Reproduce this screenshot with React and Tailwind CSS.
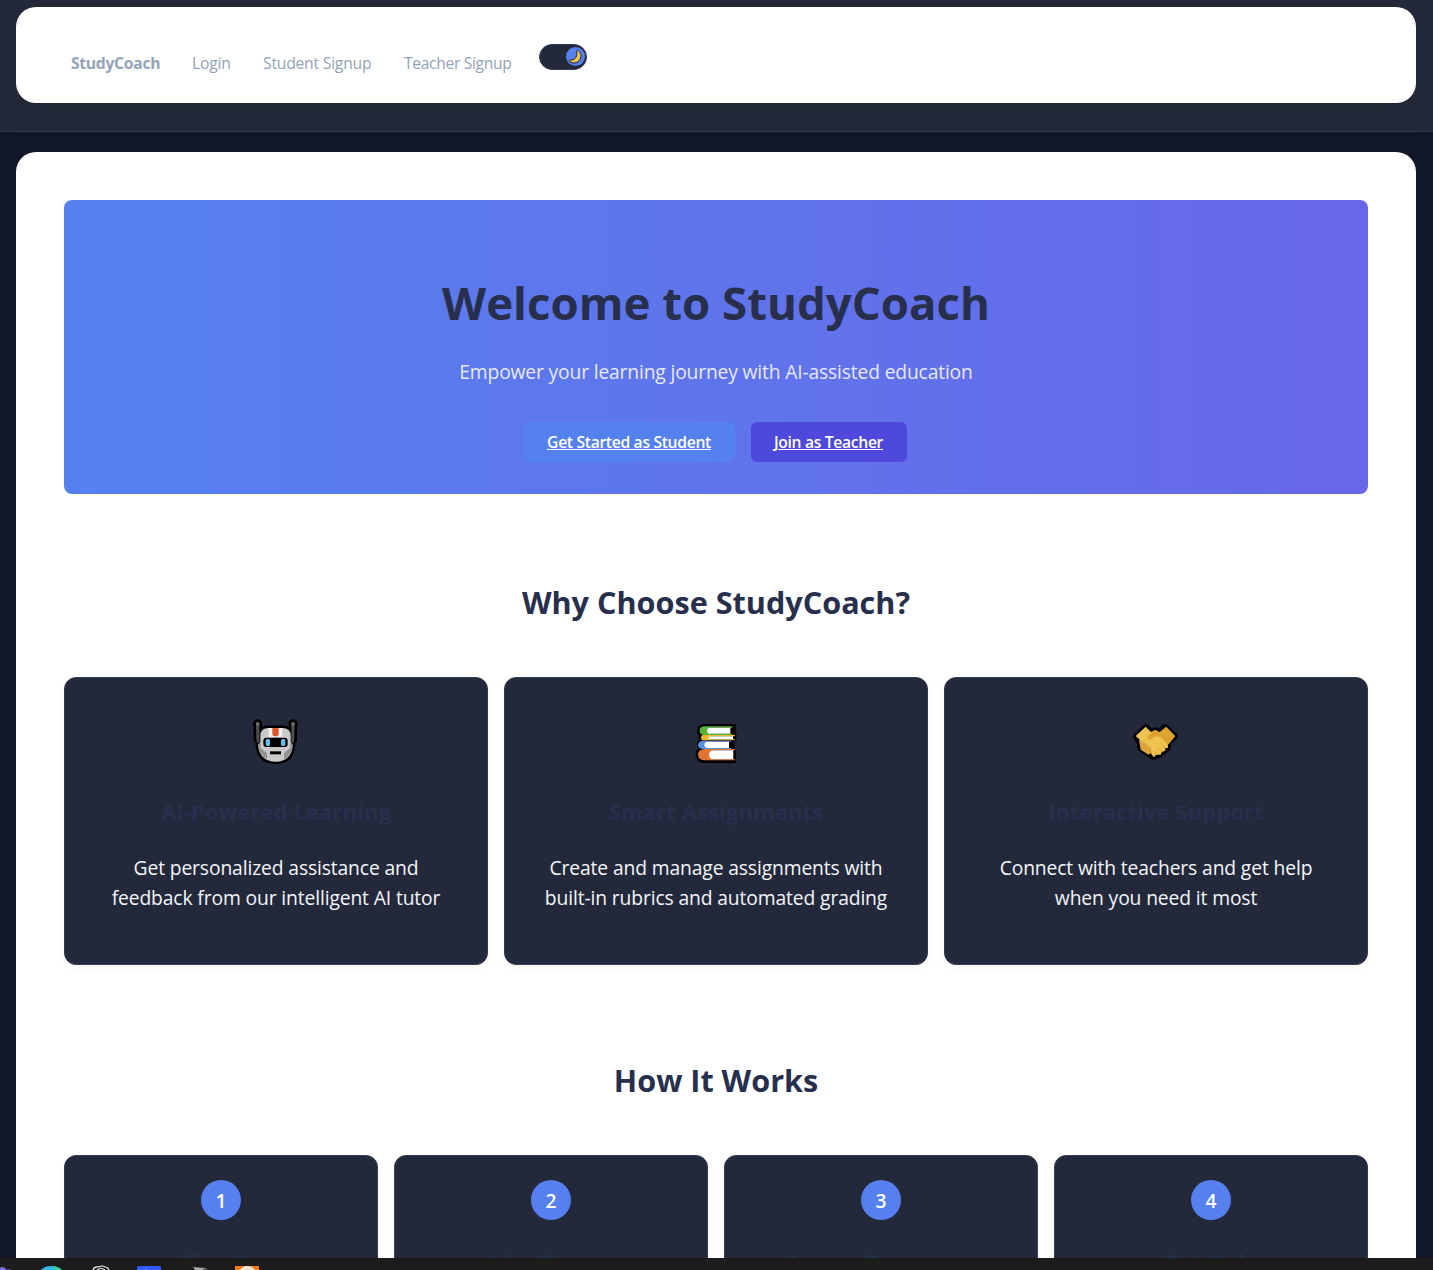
function Moon() {
  return (
    <svg viewBox="0 0 19 19" className="size-[19px]">
      <path d="M12 3.600c2.900 2 3.700 5.500 2.200 8.500-2 4-7 5-10.600 2.500-.6-.5-.2-1.400.5-1.400 3.600 0 6-1.900 6.700-5 .3-1.400.1-2.600-.2-3.900-.1-.7.800-1.200 1.400-.7z" fill="#f5c64c" stroke="#11131c" strokeWidth=".9" strokeLinejoin="round" />
    </svg>
  );
}

function Robot() {
  return (
    <svg viewBox="3 0 240 210" className="h-[70px] w-20">
      <g fill="none" stroke="#000" strokeLinecap="round" strokeLinejoin="round">
        <path d="M68 56V104M174 56V104" strokeWidth="24" />
        <circle cx="68" cy="57" r="7" strokeWidth="14" />
        <circle cx="174" cy="57" r="7" strokeWidth="14" />
        <path d="M76 112V96Q76 69 101 69H142Q167 69 167 96V112L173 120Q170 170 122 170Q74 170 69 120Z" fill="#000" strokeWidth="15" />
      </g>
      <path d="M63 58H73V113H66Q63 100 64 85ZM169 58H179L178 85Q179 100 176 113H169Z" fill="#505050" />
      <circle cx="68" cy="57" r="6" fill="#6b6b6b" />
      <circle cx="174" cy="57" r="6" fill="#6b6b6b" />
      <path d="M76 112V93Q76 69 101 69H142Q167 69 167 93V112L173 120Q170 170 122 170Q74 170 69 120Z" fill="#c9c9c9" />
      <path d="M69 119L77 112V128L96 145V162Q72 150 69 119ZM173 119L166 112V128L147 145V162Q170 150 173 119Z" fill="#929292" />
      <path d="M101 69H142V96H101Z" fill="#f2f2f2" />
      <path d="M112 69H131V86Q131 94 122 94Q112 94 112 86Z" fill="#dd562c" />
      <rect x="85" y="98" width="73" height="28" rx="9" fill="#000" />
      <rect x="92" y="102" width="13" height="21" rx="5" fill="#62c1ec" />
      <rect x="138" y="102" width="13" height="21" rx="5" fill="#62c1ec" />
      <rect x="105" y="139" width="33" height="9" fill="#000" />
    </svg>
  );
}

function Books() {
  return (
    <svg viewBox="3 0 240 210" className="h-[70px] w-20">
      <path d="M88 57H183V85H184V108H179V130H183V174H83Q62 169 62 149Q62 136 70 130Q62 115 72 105Q70 97 70 92Q62 76 70 65Q78 57 88 57Z" fill="#000" />
      <path d="M172 64H87Q74 65 74 77Q74 90 90 90H172V86H106V68H172Z" fill="#55b236" />
      <path d="M166 68H104Q96 69 96 78Q97 86 105 86H166Z" fill="#fff" />
      <path d="M180 90H83Q78 91 78 98Q78 106 87 106H180V103H105V94H180Z" fill="#efb72f" />
      <path d="M174 94H106Q101 95 101 99Q101 103 106 103H174Z" fill="#fff" />
      <path d="M168 107H84Q69 109 69 120Q70 132 85 132H168V129H95V110H168Z" fill="#5590dc" />
      <path d="M162 110H95Q88 112 88 120Q89 129 98 129H162Z" fill="#fff" />
      <path d="M180 132H90Q69 133 69 149Q70 166 91 166H180V163H112V136H180Z" fill="#e07430" />
      <path d="M175 136H114Q102 138 102 149Q104 163 116 163H175Z" fill="#fff" />
    </svg>
  );
}

function Handshake() {
  return (
    <svg viewBox="3 0 240 210" className="h-[70px] w-20">
      <path d="M93 64L111 79L121 74L132 79L151 64L181 93L160 116V128L149 139L137 148L125 154L114 157L99 147L76 132L72 113L62 94Z" fill="#000" stroke="#000" strokeWidth="15" strokeLinejoin="round" />
      <path d="M154 65L181 94L158 121L140 110L111 91L96 97L105 82L121 75L133 82Z" fill="#dca42f" />
      <path d="M72 104L90 104L107 132L108 145L101 149L77 134Z" fill="#dca438" />
      <path d="M92 65L62 93L78 107L93 116L106 130L109 147L116 157L124 149L137 149L140 141L151 137L150 130L160 128L158 119L130 88L110 83Z" fill="#efc34f" />
      <path d="M110 83L98 94Q93 102 103 104Q109 104 117 95L130 94L137 98L134 82L121 75Z" fill="#dca42f" />
      <path d="M140 120L151 131M129 129L141 142M119 139L127 150" fill="none" stroke="#d9a139" strokeWidth="3" />
    </svg>
  );
}

const features = [
  { Icon: Robot, title: 'AI-Powered Learning', lines: ['Get personalized assistance and', 'feedback from our intelligent AI tutor'] },
  { Icon: Books, title: 'Smart Assignments', lines: ['Create and manage assignments with', 'built-in rubrics and automated grading'] },
  { Icon: Handshake, title: 'Interactive Support', lines: ['Connect with teachers and get help', 'when you need it most'] },
];

const steps = ['Sign Up', 'Join Classes', 'Access Resources', 'Get Help'];

function Taskbar() {
  return (
    <footer className="absolute inset-x-0 bottom-0 h-3 bg-[#1c1c1c]">
      <svg viewBox="0 0 290 12" className="block h-3 w-[290px]">
        <circle cx="2" cy="14" r="5" fill="#7673dd" />
        <circle cx="9" cy="14" r="3" fill="#5b4a85" />
        <path d="M41 12Q44 8 51 8Q58 8 62 12Z" fill="#32b9df" />
        <path d="M54 8Q59 9 62 12H55Z" fill="#42cf91" />
        <path d="M93 12Q94 8 99 9Q102 7 105 9Q108 9 109 12M97 12Q101 9 105 12" fill="none" stroke="#eee" strokeWidth="1.200" />
        <path d="M137 12V10Q137 8 140 8H158Q161 8 161 10V12Z" fill="#315cfa" />
        <path d="M145 11L149 12H145Z" fill="#6b9cff" />
        <path d="M193 9L205 10L208 12H195Z" fill="#a5aaa7" />
        <path d="M205 10L208 12H202Z" fill="#555" />
        <path d="M235 8H259V12H235Z" fill="#f47b0b" />
        <path d="M240 12Q243 8 247 8Q252 8 255 12Z" fill="#e8e6df" />
      </svg>
    </footer>
  );
}

export default function App() {
  return (
    <div className="relative h-[1270px] overflow-hidden bg-[#111728] font-['Open_Sans',sans-serif]">
      <header className="h-[132px] overflow-hidden border-b border-[#343b4d] bg-[#24293b] pt-[7px] pr-[17px] pl-4">
        <nav className="flex h-24 items-start rounded-[20px] bg-white pt-[37px] pl-[55px] text-[15.700px] leading-[38px] tracking-[-0.220px] text-[#94a3b8] shadow-[0_8px_32px_rgba(32,39,49,0.6)]">
          <a className="w-[121px] font-bold tracking-[-0.300px]">StudyCoach</a>
          <a className="w-[71px]">Login</a>
          <a className="w-[141px]">Student Signup</a>
          <a className="w-[135px] tracking-[-0.360px]">Teacher Signup</a>
          <button className="flex h-[26px] w-12 items-center justify-end rounded-full border border-[#343c50] bg-[#23293b] pr-px pb-px">
            <span className="size-[19px] rounded-full bg-[#5580ee]"><Moon /></span>
          </button>
        </nav>
      </header>

      <main className="mt-5 mr-[17px] ml-4 h-[1300px] rounded-[20px] bg-white p-12">
        <section className="flex h-[294px] flex-col items-center rounded-lg bg-linear-to-r from-[#5581ef] to-[#6767e8] pt-[69px]">
          <h1 className="text-[45.600px] leading-[66px] font-bold text-[#272f4d]">Welcome to StudyCoach</h1>
          <p className="mt-[22px] text-[19.300px] leading-[30px] tracking-[-0.170px] text-[#e6e9fc]">Empower your learning journey with AI-assisted education</p>
          <div className="mt-[35px] mr-0.5 flex gap-4 text-[15.700px] leading-10 font-semibold tracking-[-0.330px] text-white underline">
            <a className="h-10 w-[211px] rounded-md bg-[#5581ee] text-center">Get Started as Student</a>
            <a className="h-10 w-[156px] rounded-md bg-[#4f48dc] text-center">Join as Teacher</a>
          </div>
        </section>

        <h2 className="mt-[84px] text-center text-[30.600px] leading-[48px] font-bold text-[#272f4d]">Why Choose StudyCoach?</h2>
        <section className="mt-[51px] grid grid-cols-3 gap-4">
          {features.map(({ Icon, title, lines }) => (
            <article key={title} className="flex h-72 flex-col items-center rounded-xl border border-[#334052] bg-[#23293a] pt-[27px] text-center shadow-[0_4px_8px_rgba(0,0,0,0.04)]">
              <Icon />
              <h3 className="mt-5 text-[22.200px] leading-[34px] font-bold text-[#272f4d]">{title}</h3>
              <p className="mt-6 text-[19.300px] leading-[30px] tracking-[-0.130px] text-[#f4f6fa]">{lines[0]}<br />{lines[1]}</p>
            </article>
          ))}
        </section>

        <h2 className="mt-[91px] text-center text-[30.600px] leading-[48px] font-bold text-[#272f4d]">How It Works</h2>
        <section className="mt-[51px] grid grid-cols-4 gap-4">
          {steps.map((title, i) => (
            <article key={title} className="flex h-60 flex-col items-center rounded-xl border border-[#334052] bg-[#23293a] pt-6 shadow-[0_4px_8px_rgba(0,0,0,0.04)]">
              <span className="size-10 rounded-full bg-[#5580ee] text-center text-[19.300px] leading-[41px] font-semibold text-white">{i + 1}</span>
              <h3 className="mt-[25px] text-[22.200px] leading-[34px] font-bold text-[#272f4d]">{title}</h3>
            </article>
          ))}
        </section>
      </main>
      <Taskbar />
    </div>
  );
}
